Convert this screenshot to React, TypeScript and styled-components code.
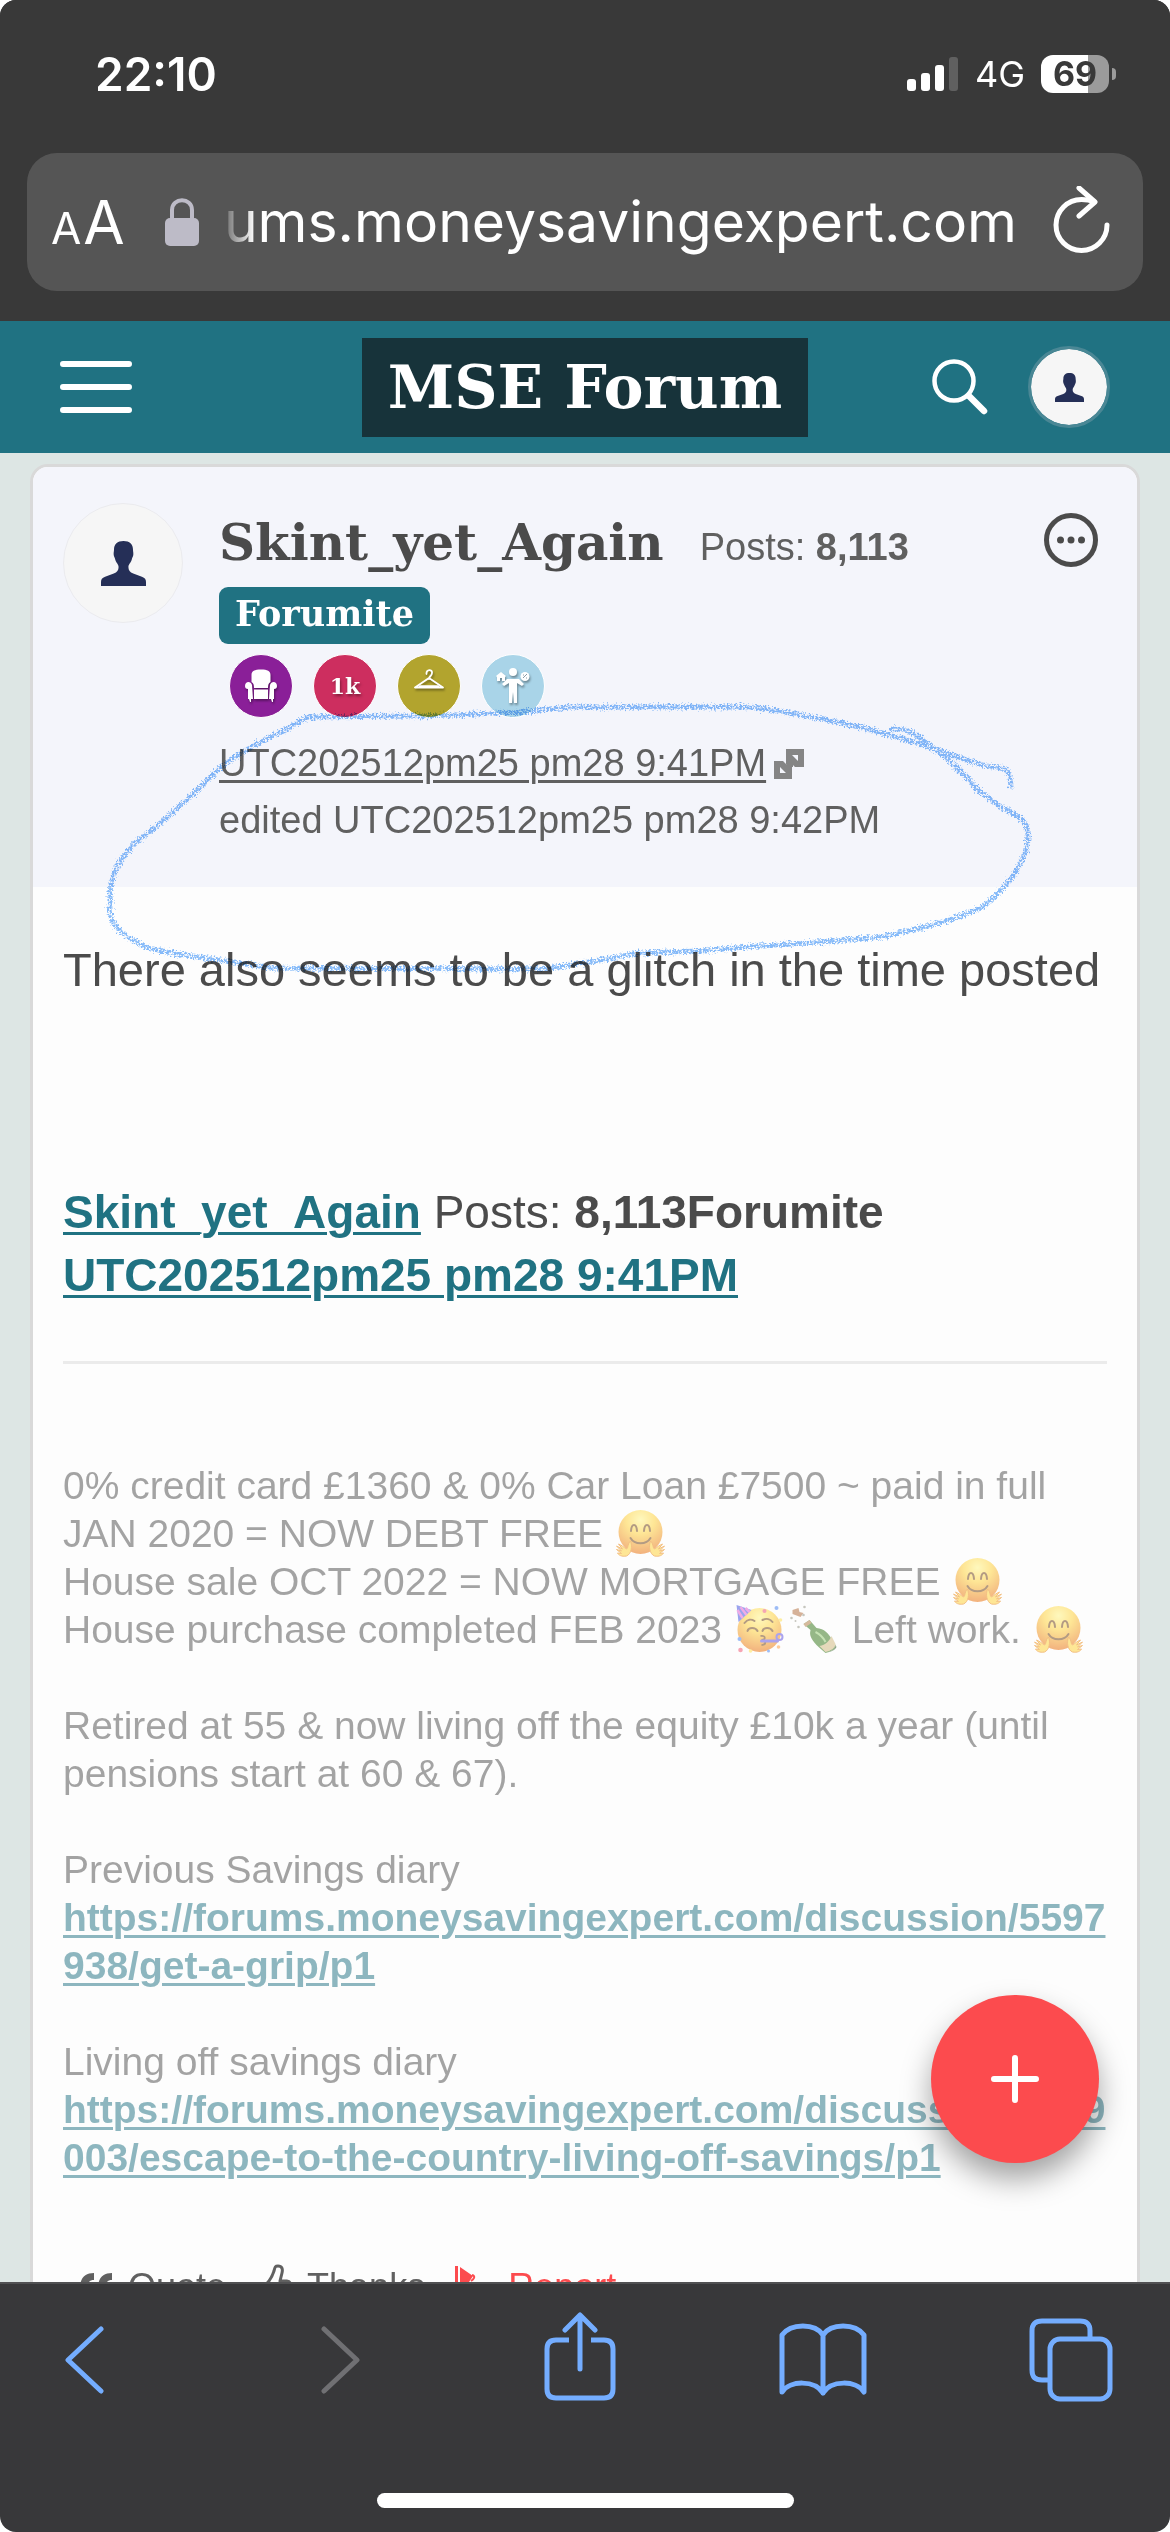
import React from "react";
import styled, { createGlobalStyle } from "styled-components";

const sans = '"Liberation Sans", Arial, sans-serif';
const slab = '"DejaVu Serif", serif';
const system = 'Inter, "Liberation Sans", sans-serif';

const color = {
  chrome: "#393939",
  toolbar: "#38383a",
  teal: "#207282",
  ink: "#4b4b4b",
  meta: "#606060",
  navy: "#252f57",
  blue: "#74adff",
  coral: "#fc4b4e",
};

const GlobalStyle = createGlobalStyle`
  * { box-sizing: border-box; }
  body { margin: 0; background: #ffffff; }
  button, input { font: inherit; color: inherit; background: none; border: 0; padding: 0; margin: 0; }
  button { cursor: pointer; display: flex; align-items: center; justify-content: center; }
  svg { display: block; }
`;

const Screen = styled.div`
  display: flex;
  flex-direction: column;
  height: 100vh;
  overflow: hidden;
  border-radius: 16px;
  background: ${color.toolbar};
  font-family: ${sans};
  color: ${color.ink};
`;

/* Browser chrome */

const StatusBar = styled.div`
  display: flex;
  flex: none;
  align-items: center;
  justify-content: space-between;
  height: 148px;
  padding: 0 54px 0 95px;
  background: ${color.chrome};
  color: #ffffff;
  font-family: ${system};
`;

const Clock = styled.time`
  font-size: 46px;
  font-weight: 600;
`;

const StatusIcons = styled.div`
  display: flex;
  align-items: center;
  gap: 16px;
`;

const Network = styled.span`
  font-size: 36px;
  line-height: 44px;
`;

const Battery = styled.div`
  display: flex;
  align-items: center;
  gap: 3px;
  &::after {
    content: "";
    width: 4px;
    height: 12px;
    border-radius: 0 4px 4px 0;
    background: #9b9b9b;
  }
`;

const BatteryLevel = styled.span<{ $level: number }>`
  width: 68px;
  border-radius: 12px;
  background: linear-gradient(90deg, #ffffff ${(p) => p.$level}%, #9b9b9b ${(p) => p.$level}%);
  color: ${color.chrome};
  font-size: 34px;
  font-weight: 700;
  line-height: 38px;
  text-align: center;
`;

const AddressArea = styled.div`
  flex: none;
  padding: 5px 27px 30px;
  background: ${color.chrome};
`;

const AddressBar = styled.div`
  display: flex;
  align-items: center;
  height: 138px;
  padding: 0 32px 0 24px;
  border-radius: 30px;
  background: #555555;
  color: #ffffff;
  font-family: ${system};
`;

const TextSizeButton = styled.button`
  align-items: baseline;
  gap: 2px;
  font-size: 60px;
  small { font-size: 44px; }
`;

const LockIcon = styled.svg`
  flex: none;
  margin-left: 40px;
`;

const AddressInput = styled.input`
  flex: 1;
  min-width: 0;
  margin: 0 36px 0 20px;
  font-size: 57px;
  line-height: 76px;
  text-align: right;
  outline: 0;
  mask-image: linear-gradient(90deg, transparent 0, #000 36px);
`;

/* Forum page */

const Page = styled.div`
  position: relative;
  flex: 1;
  min-height: 0;
  overflow: hidden;
  background: #dde6e4;
`;

const SiteHeader = styled.header`
  display: grid;
  grid-template-columns: 1fr auto 1fr;
  align-items: center;
  height: 132px;
  padding: 0 60px;
  background: ${color.teal};
  color: #ffffff;
`;

const MenuButton = styled.button`
  justify-self: start;
`;

const Logo = styled.a`
  padding: 0 26px;
  background: #17333a;
  color: #ffffff;
  font-family: ${slab};
  font-size: 60px;
  font-weight: 700;
  line-height: 99px;
  text-decoration: none;
`;

const HeaderTools = styled.div`
  display: flex;
  align-items: center;
  justify-content: flex-end;
  gap: 40px;
`;

const Avatar = styled.span<{ $size: number; $ring: string }>`
  display: flex;
  flex: none;
  align-items: center;
  justify-content: center;
  width: ${(p) => p.$size}px;
  height: ${(p) => p.$size}px;
  border-radius: 50%;
  border: ${(p) => p.$ring};
  background: #f6f6f6;
  background-clip: padding-box;
`;

const PostWrap = styled.main`
  padding: 11px 30px 0;
`;

const Post = styled.article`
  position: relative;
  border: 3px solid #d9d9d9;
  border-radius: 18px;
  background: #fdfdfd;
`;

const PostHeader = styled.header`
  display: flex;
  align-items: flex-start;
  gap: 36px;
  padding: 36px 39px 38px 30px;
  border-radius: 15px 15px 0 0;
  background: #f4f5fb;
`;

const Author = styled.div`
  flex: 1;
  min-width: 0;
`;

const NameRow = styled.div`
  display: flex;
  align-items: baseline;
  gap: 36px;
`;

const Name = styled.h2`
  margin: 0;
  font-family: ${slab};
  font-size: 50px;
  font-weight: 700;
  line-height: 80px;
`;

const PostCount = styled.span`
  color: ${color.meta};
  font-size: 38px;
`;

const Rank = styled.span`
  display: inline-block;
  margin-top: 4px;
  padding: 4px 16px 8px;
  border-radius: 9px;
  background: ${color.teal};
  color: #ffffff;
  font-family: ${slab};
  font-size: 35px;
  font-weight: 700;
  line-height: 45px;
  vertical-align: top;
`;

const Badges = styled.ul`
  display: flex;
  gap: 20px;
  margin: 10px 0 0 10px;
  padding: 0;
  list-style: none;
`;

const Badge = styled.li<{ $fill: string }>`
  display: flex;
  align-items: center;
  justify-content: center;
  width: 64px;
  height: 64px;
  border: 1px solid #ffffff;
  border-radius: 50%;
  background: ${(p) => p.$fill};
  color: #ffffff;
  font-family: ${slab};
  font-size: 22px;
  font-weight: 700;
  text-shadow: 1px 2px 3px rgba(0, 0, 0, 0.4);
  svg { filter: drop-shadow(1px 2px 1px rgba(0, 0, 0, 0.35)); }
`;

const Stamps = styled.div`
  margin-top: 17px;
  color: ${color.meta};
  font-size: 38px;
  line-height: 57px;
`;

const StampRow = styled.div`
  display: flex;
  align-items: center;
  gap: 8px;
`;

const TextLink = styled.a`
  color: inherit;
  text-decoration: underline;
  text-decoration-thickness: 3px;
  text-underline-offset: 4px;
`;

const BoldLink = styled(TextLink)`
  color: ${color.teal};
  font-weight: 700;
  word-break: break-all;
`;

const MoreButton = styled.button`
  margin-top: 10px;
`;

const PostBody = styled.div`
  padding: 51px 30px 0;
`;

const Message = styled.p`
  margin: 0 0 180px;
  font-size: 47px;
  line-height: 63px;
`;

const Quoted = styled.p`
  margin: 0 0 54px;
  font-size: 46px;
  line-height: 63px;
`;

const Rule = styled.hr`
  height: 3px;
  margin: 0;
  border: 0;
  background: #ebebeb;
`;

const Signature = styled.div`
  margin-top: 98px;
  font-size: 39px;
  line-height: 48px;
  opacity: 0.5;
  p { margin: 0 0 48px; }
  p:last-child { margin: 0; }
`;

const Emoji = styled.svg`
  display: inline-block;
  width: 49px;
  height: 48px;
  margin: -10px 3px 0 2px;
  vertical-align: -10px;
`;

const Actions = styled.div`
  display: flex;
  gap: 30px;
  margin: 81px 0 0 17px;
  padding-bottom: 60px;
`;

const Action = styled.button<{ $tone: string; $gap: number }>`
  gap: ${(p) => p.$gap}px;
  color: ${(p) => p.$tone};
  font-size: 36px;
  line-height: 48px;
`;

const Fab = styled.button`
  position: absolute;
  right: 71px;
  bottom: 119px;
  width: 168px;
  height: 168px;
  border-radius: 50%;
  background: ${color.coral};
  box-shadow: 0 16px 30px rgba(0, 0, 0, 0.36);
`;

const Scribble = styled.svg`
  position: absolute;
  left: 67px;
  top: 223px;
  pointer-events: none;
  mix-blend-mode: multiply;
`;

/* Bottom toolbar */

const Toolbar = styled.nav`
  display: flex;
  flex: none;
  align-items: center;
  justify-content: space-between;
  height: 158px;
  padding: 0 57px 4px 42px;
  border-top: 2px solid #505052;
  background: ${color.toolbar};
  color: ${color.blue};
`;

const HomeArea = styled.div`
  display: flex;
  flex: none;
  justify-content: center;
  height: 92px;
  padding-top: 53px;
`;

const HomeIndicator = styled.span`
  width: 417px;
  height: 15px;
  border-radius: 8px;
  background: #ffffff;
`;

function Person({ size }: { size: number }) {
  return (
    <svg width={size} height={size} viewBox="0 0 44 44" fill={color.navy} aria-hidden="true">
      <path d="M22 0c6 0 9.300 3 9.300 8.500 0 2 .5 2.300.3 5-.2 2-1 2.500-1.500 4.500-.6 3-3.300 4.500-3.300 7.500 0 3.500 1.500 5 4.700 6.300l8.500 3.200c3 1.200 4 2.500 4 5V44H0v-4c0-2.500 1-3.800 4-5l8.500-3.200c3.200-1.300 4.700-2.800 4.700-6.300 0-3-2.700-4.500-3.300-7.500-.5-2-1.300-2.500-1.500-4.500-.2-2.700.3-3 .3-5C12.700 3 16 0 22 0z" />
    </svg>
  );
}

function Hug() {
  return (
    <Emoji viewBox="0 0 48 48" role="img" aria-label="hugging face">
      <defs>
        <radialGradient id="hugFace" cx="50%" cy="22%" r="80%">
          <stop offset="0" stopColor="#fff480" />
          <stop offset=".4" stopColor="#ffd030" />
          <stop offset="1" stopColor="#e86400" />
        </radialGradient>
      </defs>
      <circle cx="24" cy="23" r="22" fill="url(#hugFace)" />
      <path d="M14.500 22c.6-8 5.400-8 6 0M27.500 22c.6-8 5.400-8 6 0" fill="none" stroke="#6b3c0c" strokeWidth="2" strokeLinecap="round" />
      <path d="M14 29c4 7 16 7 20 0" fill="none" stroke="#6b3c0c" strokeWidth="2" strokeLinecap="round" />
      <path d="M14 32c2 5 1 13-4 15-5 1-8-1-9-3l4 .5-5-4 5 1.500-5-5 6 3-4-5c3 1 5 3 8 5 2-1 1-6 4-8z" fill="#ffd030" stroke="#e8820c" strokeWidth="1" />
      <path d="M34 32c-2 5-1 13 4 15 5 1 8-1 9-3l-4 .5 5-4-5 1.500 5-5-6 3 4-5c-3 1-5 3-8 5-2-1-1-6-4-8z" fill="#ffd030" stroke="#e8820c" strokeWidth="1" />
    </Emoji>
  );
}

function Party() {
  return (
    <Emoji viewBox="0 0 48 48" role="img" aria-label="partying face">
      <circle cx="24" cy="25" r="22" fill="url(#hugFace)" />
      <path d="M1 0l15 5L3 17z" fill="#3a4ee0" />
      <path d="M2 5l5 8M5 2l6 8M10 3l4 4" stroke="#e25bd0" strokeWidth="2.500" />
      <path d="M12 26c1-4 8-4 10 0M27 26c1-4 8-4 10 0M9 18c3-4 7-4 10-2M27 15c4-2 8-1 10 2" fill="none" stroke="#6b3c0c" strokeWidth="2" strokeLinecap="round" />
      <path d="M25 31c6-1 5 4 1 4 5 0 5 5 0 5" fill="none" stroke="#6b3c0c" strokeWidth="1.800" />
      <path d="M26 36h16" stroke="#5a4be0" strokeWidth="3" strokeLinecap="round" />
      <circle cx="44" cy="32" r="3" fill="none" stroke="#5a4be0" strokeWidth="2" />
      <circle cx="41" cy="3" r="2" fill="#3f7df0" />
      <circle cx="29" cy="6" r="2" fill="#f0506e" />
      <circle cx="4" cy="34" r="2" fill="#3f7df0" />
      <circle cx="5" cy="45" r="2.300" fill="#f0506e" />
      <circle cx="43" cy="42" r="1.800" fill="#ff9a3c" />
      <circle cx="33" cy="46" r="1.500" fill="#3f7df0" />
      <circle cx="45" cy="15" r="1.800" fill="#ffe04a" />
      <circle cx="15" cy="46" r="1.800" fill="#ffe04a" />
    </Emoji>
  );
}

function Bottle() {
  return (
    <Emoji viewBox="0 0 48 48" role="img" aria-label="bottle with popping cork">
      <path d="M14 19l6-4 7 8c8 1 12 5 15 11l4 6c0 4-5 7-10 8-6-5-13-11-15-17-1-3 0-5 0-6z" fill="#2f7414" />
      <path d="M14 19l6-4 2 3-6 4z" fill="#b07a40" />
      <path d="M42 31l4 8c0 4-5 7-10 8l-6-6c6-1 10-5 12-10z" fill="#d0b67c" />
      <path d="M36 48c5-1 10-4 10-8l1 2c-1 3-6 5-11 6z" fill="#1c4a0c" />
      <path d="M26 27c4 2 8 6 10 10" stroke="#8fc86c" strokeWidth="2" fill="none" />
      <path d="M3 5l6-2 1 4 4 1-3 4-8-3z" fill="#b06a38" />
      <g fill="#909080">
        <circle cx="15" cy="2" r="1.300" /><circle cx="2" cy="13" r="1.300" />
        <circle cx="6" cy="16" r="1" /><circle cx="9" cy="22" r="1.300" />
        <circle cx="14" cy="10" r="1.300" />
      </g>
    </Emoji>
  );
}

const icon = { fill: "none", stroke: "currentColor", strokeLinecap: "round", strokeLinejoin: "round" } as const;

export default function App() {
  return (
    <Screen>
      <GlobalStyle />
      <StatusBar>
        <Clock>22:10</Clock>
        <StatusIcons>
          <svg width="52" height="34" viewBox="0 0 52 34" fill="#ffffff" aria-label="Signal">
            <rect x="0" y="22" width="9" height="12" rx="3" />
            <rect x="14" y="16" width="9" height="18" rx="3" />
            <rect x="28" y="8" width="9" height="26" rx="3" />
            <rect x="42" y="0" width="9" height="34" rx="3" fill="#606060" />
          </svg>
          <Network>4G</Network>
          <Battery>
            <BatteryLevel $level={69}>69</BatteryLevel>
          </Battery>
        </StatusIcons>
      </StatusBar>

      <AddressArea>
        <AddressBar>
          <TextSizeButton aria-label="Text size"><small>A</small>A</TextSizeButton>
          <LockIcon width="34" height="49" viewBox="0 0 34 49" aria-hidden="true">
            <path d="M7 22V12c0-13 20-13 20 0v10" fill="none" stroke="#bdbbc7" strokeWidth="4" />
            <rect x="0" y="20" width="34" height="28" rx="5" fill="#bdbbc7" />
          </LockIcon>
          <AddressInput aria-label="Address" defaultValue="ums.moneysavingexpert.com" />
          <button aria-label="Reload">
            <svg width="58" height="72" viewBox="0 0 58 72" {...icon} strokeWidth="5">
              <path d="M54 39a25.500 25.500 0 1 1-25.500-25.500c4 0 8 .3 12 2" />
              <path d="M26 2l16 14-16 14" />
            </svg>
          </button>
        </AddressBar>
      </AddressArea>

      <Page>
        <SiteHeader>
          <MenuButton aria-label="Menu">
            <svg width="72" height="52" viewBox="0 0 72 52" {...icon} strokeWidth="6">
              <path d="M3 3h66M3 26h66M3 49h66" />
            </svg>
          </MenuButton>
          <Logo href="#">MSE Forum</Logo>
          <HeaderTools>
            <button aria-label="Search">
              <svg width="56" height="56" viewBox="0 0 56 56" {...icon}>
                <circle cx="22" cy="22" r="19.500" strokeWidth="4.500" />
                <path d="M37 37l15 15" strokeWidth="6.500" />
              </svg>
            </button>
            <button aria-label="Account">
              <Avatar $size={82} $ring="3px solid #4a8795"><Person size={29} /></Avatar>
            </button>
          </HeaderTools>
        </SiteHeader>

        <PostWrap>
          <Post>
            <PostHeader>
              <Avatar $size={120} $ring="1px solid #ebebee"><Person size={45} /></Avatar>
              <Author>
                <NameRow>
                  <Name>Skint_yet_Again</Name>
                  <PostCount>Posts: <b>8,113</b></PostCount>
                </NameRow>
                <Rank>Forumite</Rank>
                <Badges>
                  <Badge $fill="#8a1f98" aria-label="Armchair">
                    <svg width="32" height="34" viewBox="0 0 32 34" fill="#ffffff">
                      <path d="M6.500 13V6c0-4 3-5.500 9.500-5.500S25.500 2 25.500 6v7c-2 1-2.500 3-2.500 6H9c0-3-.5-5-2.500-6z" />
                      <path d="M0 17c0-5 6-5 7-1l1 14H3V20c-2 0-3-1-3-3zM32 17c0-5-6-5-7-1l-1 14h5V20c2 0 3-1 3-3zM9 20.500h14V30H9zM4 30h2v3H5zM26 30h2v3h-1z" />
                    </svg>
                  </Badge>
                  <Badge $fill="#cd2e5f">1k</Badge>
                  <Badge $fill="#b2a42e" aria-label="Hanger">
                    <svg width="32" height="34" viewBox="0 0 32 34" fill="none" stroke="#ffffff" strokeLinejoin="round" strokeLinecap="round">
                      <path d="M13.500 5c-.5-5 6-5 5.500-1 0 3-3 3-3 6M16 9L2 18.500h28L16 9" strokeWidth="1.800" />
                      <path d="M7 17.500h18" strokeWidth="2.500" />
                    </svg>
                  </Badge>
                  <Badge $fill="#a9d4e8" aria-label="Home and savings">
                    <svg width="34" height="38" viewBox="0 0 34 38" fill="#ffffff">
                      <circle cx="17" cy="5" r="4" />
                      <path d="M6 17l5-5h12l5 5-2 2-5-3v20h-3l-1-11-1 11h-3V16l-5 3z" />
                      <path d="M0 9l5-4 5 4-1 1v4H6v-3H4v3H1v-4z" />
                      <circle cx="29" cy="9.500" r="4.500" />
                      <path d="M27 11l4-4M27 8h1M30 11h1" stroke="#8a9aa4" strokeWidth="1" />
                    </svg>
                  </Badge>
                </Badges>
                <Stamps>
                  <StampRow>
                    <TextLink href="#"><time>UTC202512pm25 pm28 9:41PM</time></TextLink>
                    <svg width="30" height="30" viewBox="0 0 30 30" fill="#858585" fillRule="evenodd" aria-hidden="true">
                      <path d="M12 0h18v18H21l-3-3-3-3h-3zM18 6l6 6V6z" />
                      <path d="M0 12h9l3 3 6 3v12H0zM6 18v6h6z" />
                      <path d="M12 12h4l3 3v3h-4l-3-3z" />
                    </svg>
                  </StampRow>
                  <div>edited <time>UTC202512pm25 pm28 9:42PM</time></div>
                </Stamps>
              </Author>
              <MoreButton aria-label="More options">
                <svg width="54" height="54" viewBox="0 0 54 54" fill={color.ink}>
                  <circle cx="27" cy="27" r="24.500" fill="none" stroke={color.ink} strokeWidth="5" />
                  <circle cx="16.500" cy="27" r="3.500" />
                  <circle cx="27" cy="27" r="3.500" />
                  <circle cx="37.500" cy="27" r="3.500" />
                </svg>
              </MoreButton>
            </PostHeader>

            <PostBody>
              <Message>There also seems to be a glitch in the time posted</Message>
              <Quoted>
                <BoldLink href="#">Skint_yet_Again</BoldLink> Posts: <b>8,113Forumite</b>
                <br />
                <BoldLink href="#">UTC202512pm25 pm28 9:41PM</BoldLink>
              </Quoted>
              <Rule />
              <Signature>
                <p>
                  0% credit card £1360 &amp; 0% Car Loan £7500 ~ paid in full JAN 2020 = NOW DEBT FREE <Hug />
                  <br />
                  House sale OCT 2022 = NOW MORTGAGE FREE <Hug />
                  <br />
                  House purchase completed FEB 2023 <Party /><Bottle /> Left work. <Hug />
                </p>
                <p>Retired at 55 &amp; now living off the equity £10k a year (until pensions start at 60 &amp; 67).</p>
                <p>
                  Previous Savings diary
                  <br />
                  <BoldLink href="#">https://forums.moneysavingexpert.com/discussion/5597938/get-a-grip/p1</BoldLink>
                </p>
                <p>
                  Living off savings diary
                  <br />
                  <BoldLink href="#">https://forums.moneysavingexpert.com/discussion/6329003/escape-to-the-country-living-off-savings/p1</BoldLink>
                </p>
              </Signature>
              <Actions>
                <Action $tone={color.meta} $gap={16}>
                  <svg width="32" height="28" viewBox="0 0 32 28" fill="currentColor">
                    <path d="M14 0v7c-4 0-6 2-6 6h6v15H0V15C0 5 5 0 14 0zM32 0v7c-4 0-6 2-6 6h6v15H18V15C18 5 23 0 32 0z" />
                  </svg>
                  Quote
                </Action>
                <Action $tone={color.meta} $gap={15}>
                  <svg width="36" height="46" viewBox="0 0 36 46" {...icon} strokeWidth="3">
                    <path d="M2 21h7c4-3 7-8 9-14 1-4 1-5 4-5 4 0 5 3 4 7l-2 8h7c4 0 4 5 2 6 2 3 2 5 0 7 1 3 0 5-2 6 0 4-1 7-6 7H15c-4 0-5-3-13-3" />
                  </svg>
                  Thanks
                </Action>
                <Action $tone={color.coral} $gap={25}>
                  <svg width="28" height="42" viewBox="0 0 28 42" fill="currentColor">
                    <path d="M0 0h3v42H0zM5 1l13 9-4 6 14 6v2l-14-4v4H5z" />
                    <path d="M17 9c4 1 2 4-1 6" fill="none" stroke="currentColor" strokeWidth="2" />
                  </svg>
                  Report
                </Action>
              </Actions>
            </PostBody>

            <Scribble width="950" height="300" viewBox="100 690 950 300" aria-hidden="true">
              <defs>
                <filter id="crayon" x="-5%" y="-5%" width="110%" height="110%">
                  <feTurbulence type="fractalNoise" baseFrequency="0.55" numOctaves="2" seed="4" result="grain" />
                  <feDisplacementMap in="SourceGraphic" in2="grain" scale="8" xChannelSelector="R" yChannelSelector="G" result="rough" />
                  <feColorMatrix in="grain" type="matrix" values="0 0 0 0 0  0 0 0 0 0  0 0 0 0 0  0 0 5 0 -1.600" result="holes" />
                  <feComposite in="rough" in2="holes" operator="in" />
                </filter>
              </defs>
              <g fill="none" stroke="#86bcfb" strokeWidth="5" strokeLinecap="round" strokeLinejoin="round" filter="url(#crayon)">
                <path d="M1011 786C1010 774 1008 768 1000 768C985 767 960 758 920 744C870 728 820 718 790 713C760 708 750 706 740 707L570 707C545 709 525 713 500 713C470 714 440 716 410 716L307 717C292 728 265 738 240 754C215 768 205 785 185 801C165 820 150 832 139 840C122 854 113 870 110 890L110 912C112 926 124 936 140 944C160 955 240 961 269 968L540 969C570 967 610 957 640 953L700 951C750 946 830 942 880 937C925 928 965 917 985 905C1000 893 1016 875 1022 860C1028 848 1028 840 1028 832C1026 820 1018 816 1010 812C1000 807 990 800 975 787C960 770 950 760 935 750C920 736 908 727 892 729" />
              </g>
            </Scribble>
          </Post>
        </PostWrap>

        <Fab aria-label="New post">
          <svg width="48" height="48" viewBox="0 0 48 48" fill="none" stroke="#ffffff" strokeWidth="6" strokeLinecap="round">
            <path d="M24 3v42M3 24h42" />
          </svg>
        </Fab>
      </Page>

      <Toolbar>
        <button aria-label="Back">
          <svg width="88" height="68" viewBox="0 0 88 68" {...icon} strokeWidth="5">
            <path d="M59 3L26 34l33 31" />
          </svg>
        </button>
        <button aria-label="Forward" disabled>
          <svg width="88" height="68" viewBox="0 0 88 68" {...icon} stroke="#707073" strokeWidth="5">
            <path d="M36 3l33 31L36 65" />
          </svg>
        </button>
        <button aria-label="Share">
          <svg width="88" height="96" viewBox="-10 0 88 96" {...icon} strokeLinecap="butt" strokeWidth="5">
            <path d="M25 28H12c-6 0-9 3-9 9v40c0 6 3 9 9 9h48c6 0 9-3 9-9V37c0-6-3-9-9-9H47" />
            <path d="M36 57V4M21 18L36 3l15 15" strokeLinecap="round" />
          </svg>
        </button>
        <button aria-label="Bookmarks">
          <svg width="88" height="74" viewBox="0 0 88 74" {...icon} strokeWidth="5">
            <path d="M44 12C36 0 12 0 3 12v57C11 57 36 57 44 70C52 57 77 57 85 69V12C76 0 52 0 44 12zM44 12v58" />
          </svg>
        </button>
        <button aria-label="Tabs">
          <svg width="88" height="84" viewBox="-4 0 88 84" {...icon} strokeWidth="5">
            <path d="M20 62h-7c-7 0-10-3-10-10V13c0-7 3-10 10-10h38c7 0 10 3 10 10v7" />
            <rect x="21" y="21" width="60" height="60" rx="10" />
          </svg>
        </button>
      </Toolbar>
      <HomeArea>
        <HomeIndicator />
      </HomeArea>
    </Screen>
  );
}
